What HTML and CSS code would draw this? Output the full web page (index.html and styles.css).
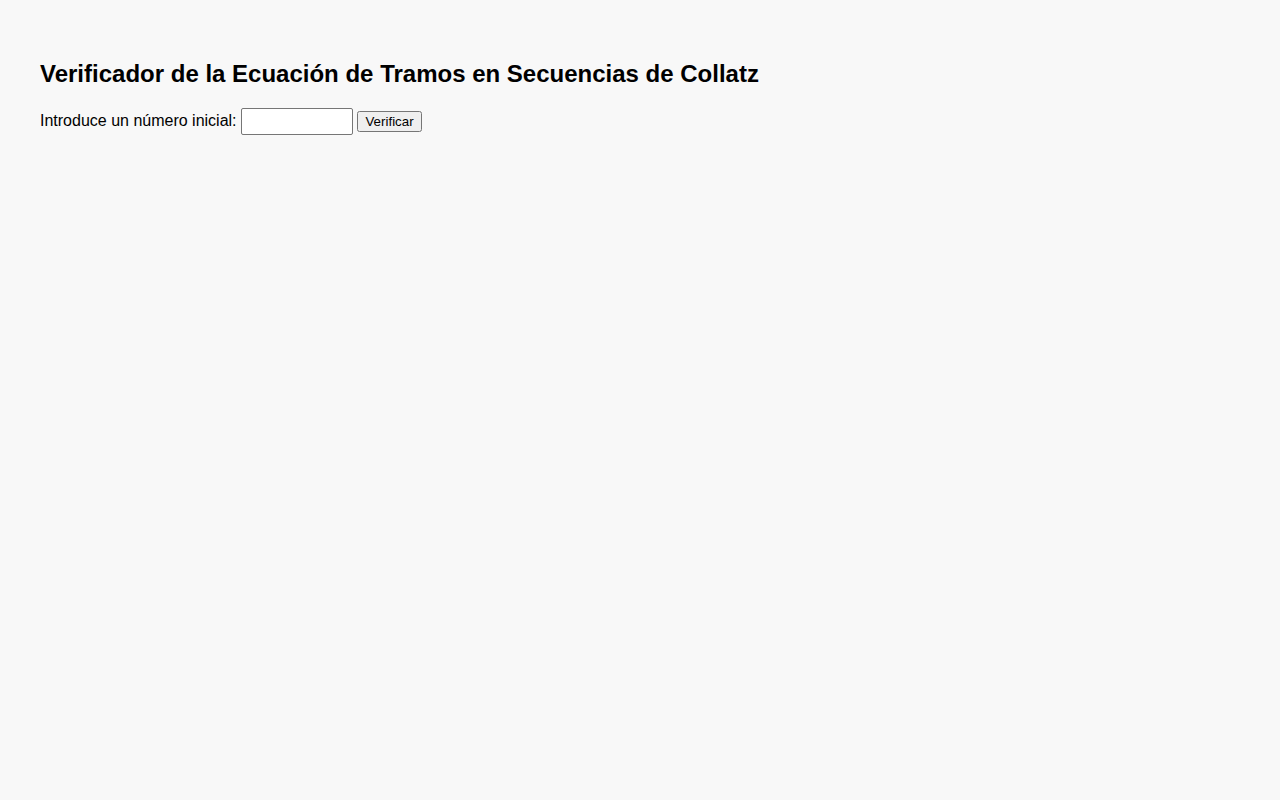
FILE: index.html
```html
<!DOCTYPE html>
<html lang="es">
<head>
    <meta charset="UTF-8">
    <meta name="viewport" content="width=device-width, initial-scale=1.0">
    <title>Verificador de Collatz</title>
    <link rel="stylesheet" href="styles.css">
</head>
<body>
    <h2>Verificador de la Ecuación de Tramos en Secuencias de Collatz</h2>
    <div class="form-row">
        <label for="numeroInicial">Introduce un número inicial:</label>
        <input type="number" id="numeroInicial">
        <button id="verificar">Verificar</button>
    </div>
    <div id="resultado" class="result"></div>
</body>
</html>
```

FILE: styles.css
```css
body {
    font-family: "Liberation Sans", Arial, sans-serif;
    margin: 0;
    padding: 40px;
    background-color: #f8f8f8;
    color: #000;
}

h2 {
    font-size: 24px;
}

input {
    padding: 5px;
    width: 100px;
    border: 1px solid #767676;
    border-radius: 2px;
    background: white;
    font-family: "Liberation Sans", Arial, sans-serif;
}

button {
    font-family: "Liberation Sans", Arial, sans-serif;
}

.result {
    margin-top: 20px;
}
```
